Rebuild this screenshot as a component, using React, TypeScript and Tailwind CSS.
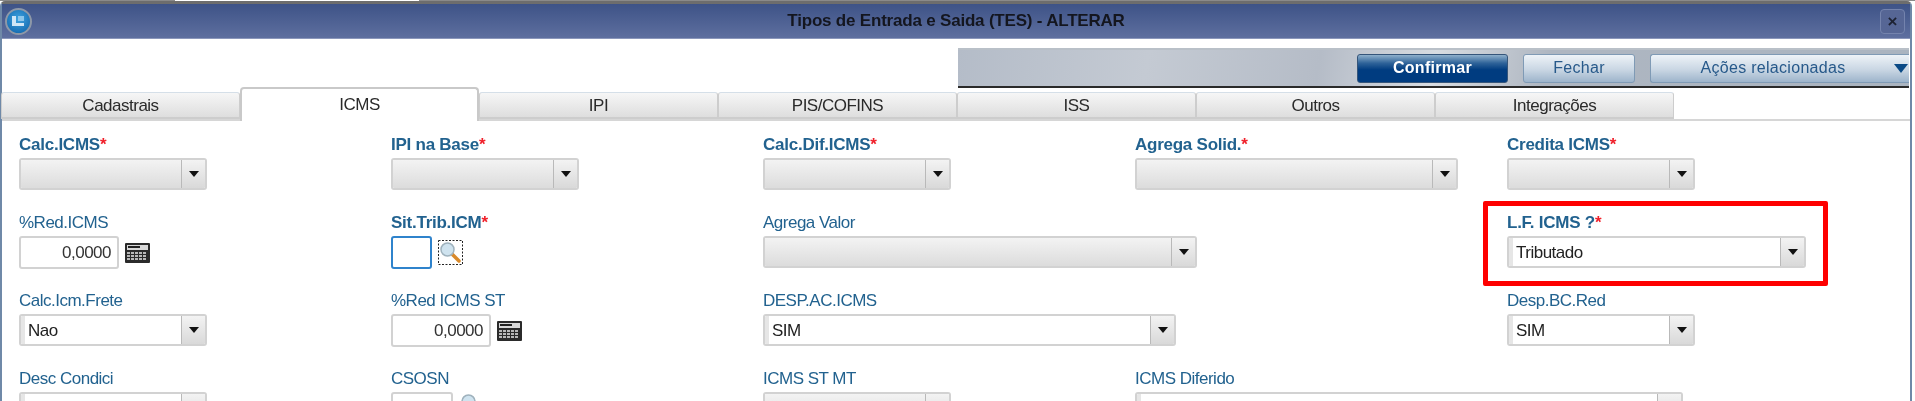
import type { ReactNode } from "react";

const TABS = ["Cadastrais", "ICMS", "IPI", "PIS/COFINS", "ISS", "Outros", "Integrações"];

function Label({ text, required }: { text: string; required?: boolean }) {
  return (
    <div className={`h-[24px] leading-[22px] text-[17px] text-[#22628f] whitespace-nowrap ${required ? "font-bold tracking-[-0.25px]" : "tracking-[-0.5px]"}`}>
      {text}
      {required && <span className="text-[#f0202a]">*</span>}
    </div>
  );
}

function Combo({ value, className }: { value?: string; className: string }) {
  return (
    <div className={`h-[32px] flex rounded-[3px] border-2 border-[#d2d2d2] overflow-hidden ${className}`}>
      {value ? (
        <div className="flex-1 bg-white border-l-[4px] border-[#e6e6e6] pl-[3px] leading-[30px] text-[17px] tracking-[-0.5px] text-[#222222]">{value}</div>
      ) : (
        <div className="flex-1 bg-gradient-to-b from-[#f3f3f3] to-[#dcdcdc]" />
      )}
      <div className="w-[24px] shrink-0 flex items-center justify-center border-l border-[#b9b9b9] bg-gradient-to-b from-[#f3f3f3] to-[#d9d9d9]">
        <svg width="10" height="6" viewBox="0 0 10 6">
          <path d="M0 0H10L5 6Z" fill="#111111" />
        </svg>
      </div>
    </div>
  );
}

function NumberInput({ className }: { className: string }) {
  return (
    <div className={`h-[33px] rounded-[3px] border-2 border-[#d2d2d2] bg-white pr-[6px] text-right leading-[29px] text-[17px] tracking-[-0.5px] text-[#333333] ${className}`}>
      0,0000
    </div>
  );
}

function Calc() {
  return (
    <svg width="25" height="20" viewBox="0 0 25 20" className="shrink-0">
      <rect width="25" height="20" rx="1" fill="#2b2b2b" />
      <rect x="2" y="2" width="21" height="5" fill="#d9d9d9" />
      <rect x="3" y="3" width="12" height="2" fill="#222222" />
      {[9, 12, 15].map((y) =>
        [2, 6, 10, 14, 18].map((x) => <rect key={`${x}-${y}`} x={x} y={y} width="3" height="2" fill="#b8b8b8" />)
      )}
    </svg>
  );
}

function Lookup({ focused }: { focused?: boolean }) {
  return (
    <svg width="25" height="25" viewBox="0 0 25 25" className="shrink-0">
      {focused && <rect x="0.5" y="0.5" width="24" height="24" fill="none" stroke="#222222" strokeDasharray="2 1.5" />}
      <line x1="13" y1="13" x2="21" y2="21" stroke="#d98a2b" strokeWidth="3.5" strokeLinecap="round" />
      <circle cx="9.5" cy="9.5" r="6.5" fill="#cfe3ef" stroke="#9fb2bd" strokeWidth="1.5" />
    </svg>
  );
}

function Field({ label, required, className, children }: { label: string; required?: boolean; className?: string; children: ReactNode }) {
  return (
    <div className={className}>
      <Label text={label} required={required} />
      {children}
    </div>
  );
}

function ActionButton({ children, className }: { children: ReactNode; className: string }) {
  return (
    <div className={`h-[29px] rounded-[3px] flex items-center text-[16px] tracking-[0.3px] ${className}`}>{children}</div>
  );
}

export default function App() {
  return (
    <div className="relative w-[1915px] h-[401px] overflow-hidden bg-white font-['Liberation_Sans',Arial,sans-serif] blur-[0.35px]">
      {/* sliver of the page behind the dialog */}
      <div className="h-[1px] flex bg-[#8a8a8a]">
        <div className="w-[175px]" />
        <div className="w-[244px] bg-white" />
      </div>

      <div className="mr-[3px] h-[400px] rounded-t-[5px] border-x-2 border-t-[3px] border-x-[#6f89a8] border-t-[#6d6d6d]">
        {/* title bar */}
        <div className="h-[35px] flex items-center justify-between pl-[3px] pr-[5px] bg-gradient-to-b from-[#3e5387] to-[#5e6f9f] border-b border-[#8b97bb]">
          <div className="w-[27px] h-[27px] rounded-full border-2 border-[#8d98a8] bg-[radial-gradient(circle_at_50%_40%,#3fa4e0,#0b5ea6)] flex items-center justify-center">
            <svg width="13" height="13" viewBox="0 0 13 13">
              <path d="M0 1H4V8H12V11H0Z" fill="#cfe6f6" />
              <rect x="6" y="1" width="6" height="5" fill="#8cc6ea" />
            </svg>
          </div>
          <div className="text-[17px] font-bold tracking-[-0.2px] text-[#14161f]">Tipos de Entrada e Saida (TES) - ALTERAR</div>
          <div className="w-[25px] h-[25px] rounded-[4px] border border-[#7483ad] bg-[#566695] flex items-center justify-center text-[17px] font-bold leading-none text-[#1d2233]">
            ×
          </div>
        </div>

        {/* toolbar */}
        <div className="mt-[9px] ml-[956px] mr-[1px] h-[40px] flex items-center pl-[399px] border-b-2 border-[#2a2a2a] border-t-2 border-t-[#b9c0c8] bg-[linear-gradient(100deg,#b4bcc8_0%,#c4cad3_20%,#b5bcc7_38%,#d8dce1_50%,#aeb6c1_62%,#aab4c0_100%)]">
          <ActionButton className="w-[151px] justify-center font-bold text-white bg-[linear-gradient(#8fb0cc_0%,#2f6399_30%,#003c80_55%,#003c80_100%)] border border-[#35557a]">
            Confirmar
          </ActionButton>
          <ActionButton className="ml-[15px] w-[112px] justify-center text-[#27598a] bg-[linear-gradient(#eef3f8,#c9d6e3_55%,#9db4cb)] border border-[#7f9ab5]">
            Fechar
          </ActionButton>
          <ActionButton className="ml-[15px] flex-1 relative justify-center pr-[14px] text-[#27598a] bg-[linear-gradient(#eef3f8,#c9d6e3_55%,#9db4cb)] border border-[#7f9ab5] rounded-r-none border-r-0">
            Ações relacionadas
            <svg width="14" height="9" viewBox="0 0 14 9" className="absolute right-[1px] top-[9px]">
              <path d="M0 0H14L7 9Z" fill="#0b4a86" />
            </svg>
          </ActionButton>
        </div>

        {/* tabs */}
        <div className="relative z-10 -mt-[1px] -ml-[1px] h-[32px] flex items-end">
          {TABS.map((tab) =>
            tab === "ICMS" ? (
              <div key={tab} className="w-[239px] h-[34px] -mb-[2px] relative rounded-t-[4px] border-2 border-b-0 border-[#c9c9c9] bg-white text-center leading-[32px] text-[17px] tracking-[-0.5px] text-[#2a2a2a]">
                {tab}
              </div>
            ) : (
              <div key={tab} className="w-[239px] h-[27px] rounded-t-[3px] border border-b-2 border-[#cdcdcd] border-t-[#d5dfe8] bg-gradient-to-b from-[#f6f6f6] to-[#dedede] text-center leading-[26px] text-[17px] tracking-[-0.5px] text-[#2a2a2a]">
                {tab}
              </div>
            )
          )}
        </div>

        {/* form */}
        <div className="border-t-2 border-[#d6d6d6] pt-[13px] pl-[17px]">
          <div className="grid grid-cols-[repeat(5,372px)] auto-rows-[78px]">
            <Field label="Calc.ICMS" required><Combo className="w-[188px]" /></Field>
            <Field label="IPI na Base" required><Combo className="w-[188px]" /></Field>
            <Field label="Calc.Dif.ICMS" required><Combo className="w-[188px]" /></Field>
            <Field label="Agrega Solid." required><Combo className="w-[323px]" /></Field>
            <Field label="Credita ICMS" required><Combo className="w-[188px]" /></Field>

            <Field label="%Red.ICMS">
              <div className="flex items-center gap-[6px]">
                <NumberInput className="w-[100px]" />
                <Calc />
              </div>
            </Field>
            <Field label="Sit.Trib.ICM" required>
              <div className="flex items-center gap-[6px]">
                <div className="w-[41px] h-[33px] rounded-[3px] border-2 border-[#2f83cc] bg-white" />
                <Lookup focused />
              </div>
            </Field>
            <Field label="Agrega Valor" className="col-span-2"><Combo className="w-[434px]" /></Field>
            <Field label="L.F. ICMS ?" required><Combo value="Tributado" className="w-[299px]" /></Field>

            <Field label="Calc.Icm.Frete"><Combo value="Nao" className="w-[188px]" /></Field>
            <Field label="%Red ICMS ST">
              <div className="flex items-center gap-[6px]">
                <NumberInput className="w-[100px]" />
                <Calc />
              </div>
            </Field>
            <Field label="DESP.AC.ICMS" className="col-span-2"><Combo value="SIM" className="w-[413px]" /></Field>
            <Field label="Desp.BC.Red"><Combo value="SIM" className="w-[188px]" /></Field>

            <Field label="Desc Condici"><Combo value=" " className="w-[188px]" /></Field>
            <Field label="CSOSN">
              <div className="flex items-start gap-[6px]">
                <div className="w-[62px] h-[33px] rounded-[3px] border-2 border-[#d2d2d2] bg-white" />
                <Lookup />
              </div>
            </Field>
            <Field label="ICMS ST MT"><Combo className="w-[188px]" /></Field>
            <Field label="ICMS Diferido" className="col-span-2"><Combo value=" " className="w-[548px]" /></Field>
          </div>
        </div>
      </div>

      {/* red highlight drawn over the form */}
      <div className="absolute left-[1483px] top-[201px] w-[345px] h-[85px] rounded-[2px] border-[5px] border-[#fe0000]" />
    </div>
  );
}
